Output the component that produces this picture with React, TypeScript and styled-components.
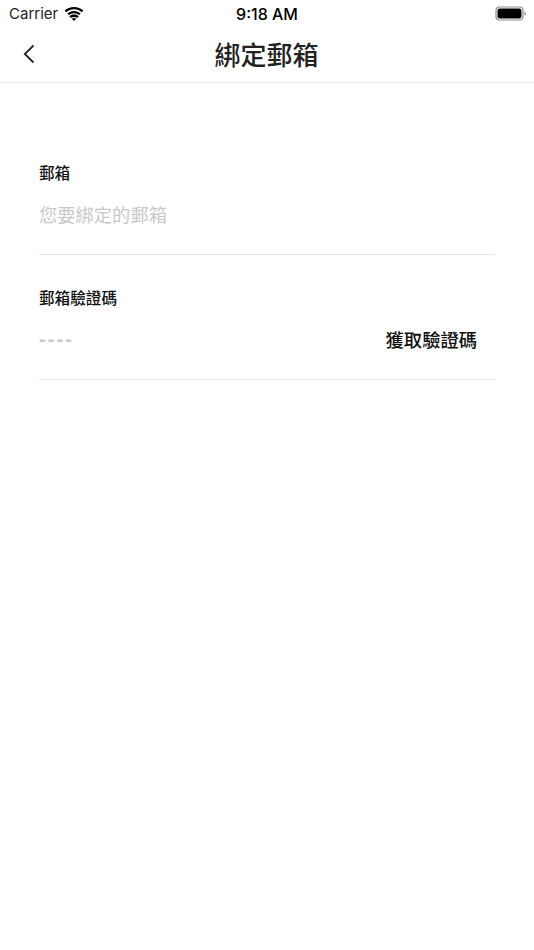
import styled, { createGlobalStyle } from 'styled-components';

const GlobalStyle = createGlobalStyle`
  html, body {
    margin: 0;
    padding: 0;
    background: #fff;
  }
  body {
    font-family: "Liberation Sans", "Noto Sans CJK TC", sans-serif;
  }
`;

const Page = styled.div`
  width: 534px;
  height: 950px;
  overflow: hidden;
  background: #fff;
`;

const StatusBar = styled.div`
  height: 27px;
  display: grid;
  grid-template-columns: 1fr auto 1fr;
  align-items: center;
  padding: 0 7px;
  color: #000;
`;

const StatusLeft = styled.div`
  display: flex;
  align-items: center;
  gap: 6px;
  padding-left: 2px;
  font-family: Inter, sans-serif;
  font-size: 15px;
  color: #222;
`;

const StatusTime = styled.div`
  font-family: Inter, sans-serif;
  font-size: 16px;
  font-weight: 500;
`;

const StatusRight = styled.div`
  display: flex;
  justify-content: flex-end;
`;

const NavBar = styled.div`
  box-sizing: border-box;
  height: 56px;
  display: grid;
  grid-template-columns: 1fr auto 1fr;
  align-items: center;
  border-bottom: 1px solid #ececec;
  padding: 0 24px 2px 23px;
`;

const BackButton = styled.button`
  width: 12px;
  height: 20px;
  padding: 0;
  border: 0;
  background: none;
  display: flex;
`;

const NavTitle = styled.h1`
  margin: 0;
  font-family: "Noto Sans CJK TC", sans-serif;
  font-size: 26px;
  font-weight: 500;
  line-height: 34px;
  color: #222;
`;

const Form = styled.form`
  padding: 77px 39px 0 39px;
  display: flex;
  flex-direction: column;
`;

const Field = styled.div`
  height: 94px;
  border-bottom: 1px solid #e6e6e6;
  display: flex;
  flex-direction: column;
  & + & {
    margin-top: 30px;
  }
`;

const FieldLabel = styled.label`
  font-family: "Noto Sans CJK TC", sans-serif;
  font-size: 15.6px;
  font-weight: 500;
  line-height: 24px;
  color: #111;
`;

const FieldRow = styled.div`
  display: flex;
  align-items: center;
  justify-content: space-between;
  margin-top: 12px;
  padding-right: 18px;
  height: 36px;
`;

const Placeholder = styled.span`
  font-family: "Noto Sans CJK TC", sans-serif;
  font-size: 18.3px;
  line-height: 28px;
  color: #c8c8c8;
`;

const CodeDash = styled.span`
  font-family: "Liberation Sans", sans-serif;
  font-size: 20px;
  font-weight: 700;
  letter-spacing: 2.1px;
  color: #c8c8c8;
`;

const CodeButton = styled.button`
  padding: 0;
  border: 0;
  background: none;
  font-family: "Noto Sans CJK TC", sans-serif;
  font-size: 18.3px;
  font-weight: 500;
  line-height: 28px;
  color: #111;
`;

export default function App() {
  return (
    <Page>
      <GlobalStyle />
      <StatusBar>
        <StatusLeft>
          Carrier
          <svg width="20" height="14" viewBox="0 0 20 14">
            <path d="M10 2.2c3 0 5.700 1.200 7.700 3.100L19.400 3.600C16.900 1.200 13.600 0 10 0S3.100 1.200.6 3.600l1.700 1.700C4.300 3.400 7 2.200 10 2.200z" fill="#000" />
            <path d="M10 6.300c1.900 0 3.600.7 4.900 1.900l1.700-1.700C14.800 4.900 12.500 4 10 4S5.200 4.900 3.400 6.500l1.700 1.700C6.400 7 8.100 6.300 10 6.300z" fill="#000" />
            <path d="M10 10c-1.200 0-2.200.4-3 1.100l-1.800-1.800C6.500 8.100 8.200 7.600 10 7.600s3.500.5 4.800 1.700L13 11.100C12.200 10.400 11.200 10 10 10z" fill="#000" />
            <path d="M10 14l2.200-2.200c-.6-.5-1.400-.8-2.200-.8s-1.600.3-2.200.8z" fill="#000" />
          </svg>
        </StatusLeft>
        <StatusTime>9:18 AM</StatusTime>
        <StatusRight>
          <svg width="32" height="15" viewBox="0 0 32 15">
            <rect x="1" y="1" width="27" height="13" rx="3.500" fill="none" stroke="#8e8e8e" strokeWidth="1.200" />
            <rect x="2.500" y="2.500" width="24" height="10" rx="2.200" fill="#000" />
            <path d="M29.500 5.500c1 .3 1.500 1 1.500 2s-.5 1.700-1.500 2z" fill="#8e8e8e" />
          </svg>
        </StatusRight>
      </StatusBar>
      <NavBar>
        <BackButton type="button" aria-label="back">
          <svg width="12" height="20" viewBox="0 0 12 20">
            <path d="M10.500 1.500L1.800 10l8.700 8.500" fill="none" stroke="#222" strokeWidth="1.800" />
          </svg>
        </BackButton>
        <NavTitle>綁定郵箱</NavTitle>
      </NavBar>
      <Form>
        <Field>
          <FieldLabel>郵箱</FieldLabel>
          <FieldRow>
            <Placeholder>您要綁定的郵箱</Placeholder>
          </FieldRow>
        </Field>
        <Field>
          <FieldLabel>郵箱驗證碼</FieldLabel>
          <FieldRow>
            <CodeDash>----</CodeDash>
            <CodeButton type="button">獲取驗證碼</CodeButton>
          </FieldRow>
        </Field>
      </Form>
    </Page>
  );
}
